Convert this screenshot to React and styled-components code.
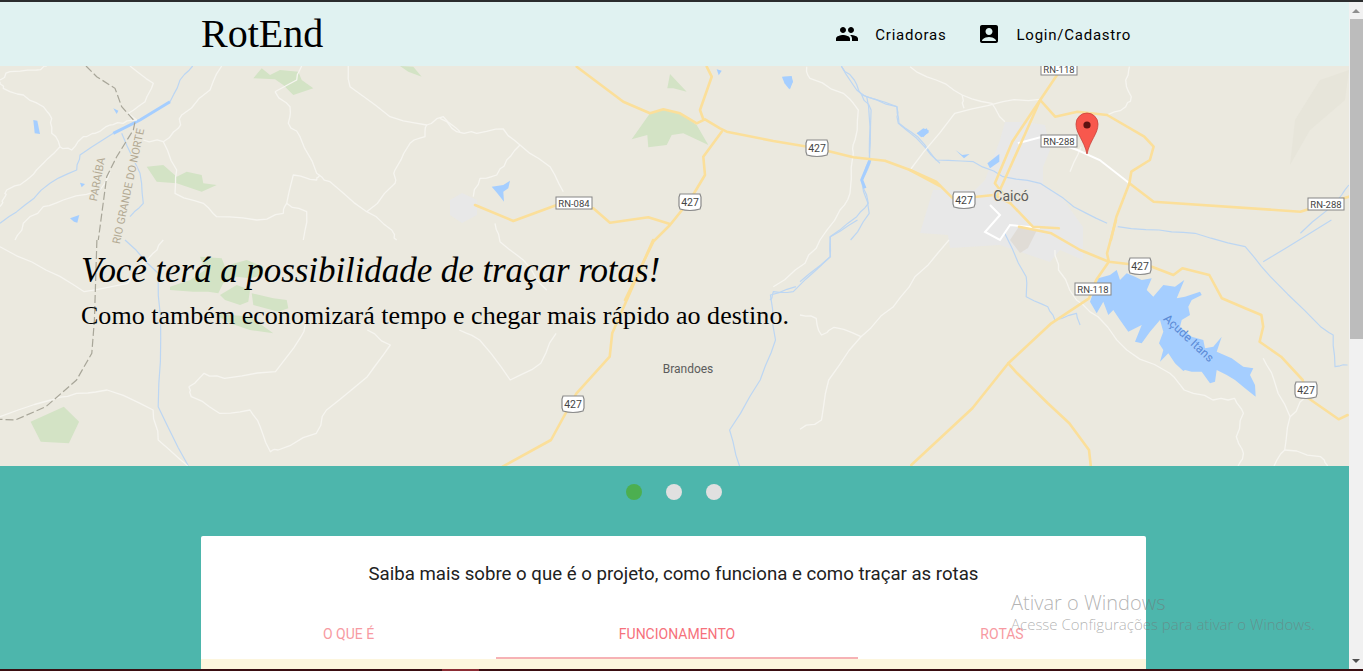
import styled, { createGlobalStyle } from 'styled-components';
import { MdPeople, MdAccountBox } from 'react-icons/md';

const GlobalStyle = createGlobalStyle`
    html, body {
        margin: 0;
        height: 100%;
        overflow: hidden;
    }
    * { box-sizing: border-box; }
`

const Screen = styled.div`
    position: relative;
    display: flex;
    flex-direction: column;
    height: 100vh;
    font-family: Roboto, "Liberation Sans", sans-serif;
`

const TopEdge = styled.div`
    height: 2px;
    background: #2b2d2e;
`

const BottomEdge = styled.div`
    display: flex;
    height: 2px;
    padding-left: 442px;
    background: #3a0e12;
    &::before {
        content: "";
        width: 37px;
        background: #8b2c34;
    }
`

const Viewport = styled.div`
    display: flex;
    flex: 1;
    min-height: 0;
`

const Page = styled.main`
    display: flex;
    flex-direction: column;
    flex: 1;
    min-width: 0;
    overflow: hidden;
`

const Scrollbar = styled.div`
    display: flex;
    flex-direction: column;
    width: 14px;
    background: #f1f1f1;
`

const ScrollArrow = styled.div`
    display: flex;
    align-items: center;
    justify-content: center;
    height: 17px;
    &::before {
        content: "";
        border-left: 4px solid transparent;
        border-right: 4px solid transparent;
        border-bottom: ${p => (p.$down ? 'none' : '4px solid #8e8e8e')};
        border-top: ${p => (p.$down ? '4px solid #505050' : 'none')};
    }
`

const ScrollTrack = styled.div`
    flex: 1;
`

const ScrollThumb = styled.div`
    height: 320px;
    margin-left: 1px;
    background: #bcbcbc;
`

const Nav = styled.nav`
    flex: none;
    height: 64px;
    background: #e0f2f1;
`

const NavInner = styled.div`
    display: flex;
    align-items: center;
    justify-content: space-between;
    width: 945px;
    height: 100%;
    margin-left: 201px;
`

const Brand = styled.a`
    font-family: "Liberation Serif", "Times New Roman", serif;
    font-size: 40px;
    line-height: 64px;
    color: #000;
`

const NavLinks = styled.ul`
    display: flex;
    margin: 0;
    padding: 0;
    list-style: none;
`

const NavLink = styled.li`
    display: flex;
    align-items: center;
    gap: 16px;
    padding: 0 15px;
    font-size: 15px;
    letter-spacing: 0.76px;
    color: #000;
    svg { display: block; }
`

const NavLabel = styled.span`
    padding-top: 2px;
`

const Hero = styled.section`
    position: relative;
    flex: none;
    height: 400px;
    background: #ebe9df;
    overflow: hidden;
`

const MapDrawing = styled.svg`
    display: block;
    width: 1349px;
    height: 400px;
`

const Caption = styled.div`
    position: absolute;
    top: 182px;
    left: 81px;
    color: #000;
    font-family: "Liberation Serif", "Times New Roman", serif;
`

const CaptionTitle = styled.h3`
    margin: 0 0 6px;
    font-size: 35px;
    font-weight: 400;
    font-style: italic;
    line-height: 46px;
    letter-spacing: -0.07px;
`

const CaptionText = styled.h5`
    margin: 0;
    font-size: 26px;
    font-weight: 400;
    line-height: 32px;
    letter-spacing: 0.03px;
`

const Band = styled.section`
    flex: 1;
    min-height: 0;
    padding-top: 18px;
    background: #4db6ac;
`

const Dots = styled.ul`
    display: flex;
    justify-content: center;
    gap: 24px;
    margin: 0 0 36px;
    padding: 0 2px 0 0;
    list-style: none;
`

const Dot = styled.li`
    width: 16px;
    height: 16px;
    border-radius: 50%;
    background: ${p => (p.$active ? '#4caf50' : '#e0e0e0')};
`

const Card = styled.article`
    width: 945px;
    margin-left: 201px;
    border-radius: 2px 2px 0 0;
    background: #fff;
`

const CardTitle = styled.h4`
    margin: 0;
    height: 74px;
    padding-top: 26px;
    font-size: 18.65px;
    font-weight: 400;
    line-height: 24px;
    text-align: center;
    color: #212121;
`

const Tabs = styled.div`
    display: grid;
    grid-template-columns: 295px 362px 288px;
    height: 49px;
`

const Tab = styled.a`
    display: flex;
    align-items: center;
    justify-content: center;
    padding-top: 1px;
    font-size: 14px;
    text-transform: uppercase;
    color: ${p => (p.$active ? '#f6717c' : '#f79aa2')};
    border-bottom: 2px solid ${p => (p.$active ? '#f6b2b5' : 'transparent')};
`

const TabBody = styled.div`
    height: 10px;
    background: #fdf6de;
`

const Watermark = styled.div`
    position: absolute;
    top: 590px;
    left: 1011px;
    font-family: "Open Sans", "Noto Sans", sans-serif;
    color: rgba(115, 115, 115, 0.55);
    pointer-events: none;
`

const WatermarkTitle = styled.div`
    font-size: 20px;
    font-weight: 300;
    line-height: 26px;
`

const WatermarkText = styled.div`
    margin-top: -2px;
    font-size: 15px;
    font-weight: 300;
    line-height: 20px;
`

// the crops of the map were read at different scales, so points stay in crop units
const crop = (ox, oy, sx, sy) => pts => {
    let out = [];
    for (let i = 0; i < pts.length; i += 2) {
        out.push(`${(ox + pts[i] / sx).toFixed(1)},${(oy + pts[i + 1] / sy).toFixed(1)}`);
    }
    return out.join(' ');
};

const west = crop(0, 0, 3, 3);
const mid = crop(440, 60, 3, 3);
const south = crop(0, 240, 1.96, 3);
const east = crop(780, 0, 2.69, 3);
const lake = crop(800, 220, 2.785, 3);
const itans = crop(1085, 265, 3, 3);
const forest = crop(150, 250, 3, 3);

// small country roads and streams wander, so split each segment and push it off line
const wobble = (line, amp) => {
    const pts = line.split(' ').map(s => s.split(',').map(Number));
    let out = [];
    pts.forEach((p, i) => {
        if (i === 0) { out.push(p.join(',')); return; }
        const q = pts[i - 1];
        for (let k = 1; k <= 3; k++) {
            const x = q[0] + ((p[0] - q[0]) * k) / 3;
            const y = q[1] + ((p[1] - q[1]) * k) / 3;
            const off = k === 3 ? 0 : amp;
            out.push(`${(x + Math.sin(x * 7.3 + y) * off).toFixed(1)},${(y + Math.cos(y * 5.1 + x) * off).toFixed(1)}`);
        }
    });
    return out.join(' ');
};

const yellowRoads = [
    mid([410, 20, 550, 125, 630, 160, 670, 148, 720, 160, 770, 190, 795, 178, 840, 205, 860, 215, 1000, 243, 1130, 265, 1240, 292, 1335, 302, 1410, 330, 1500, 378]),
    east([350, 510, 420, 545, 465, 595, 530, 590, 575, 585, 620, 610, 680, 680, 750, 685]),
    lake([610, 20, 700, 40, 780, 90, 860, 125, 980, 140, 1040, 165, 1065, 145, 1140, 165, 1175, 235, 1240, 265, 1285, 285, 1290, 320, 1280, 365, 1340, 410, 1400, 480, 1410, 530, 1500, 598, 1525, 585]),
    east([745, 225, 700, 300, 625, 425, 578, 550, 620, 610]),
    east([700, 300, 650, 425, 600, 550, 585, 585]),
    east([700, 300, 740, 350, 800, 335, 880, 345, 980, 410, 1005, 440, 995, 480, 945, 515, 940, 550, 905, 650, 890, 720]),
    east([940, 550, 1005, 605, 1400, 635, 1430, 625, 1530, 590]),
    lake([880, 0, 855, 100, 860, 125, 825, 180, 805, 235, 700, 310, 580, 430, 480, 565, 310, 735]),
    lake([580, 430, 605, 460, 690, 550, 750, 610, 805, 690, 810, 738]),
    mid([800, 20, 815, 50, 780, 150, 790, 178]),
    mid([845, 215, 790, 290, 795, 345, 750, 420, 690, 495, 640, 545, 555, 720]),
    south([1280, 0, 1200, 280, 1195, 350, 1130, 460, 1080, 600, 985, 680]),
    mid([105, 435, 220, 483, 350, 435, 460, 445, 510, 488, 625, 472, 690, 492]),
];

const whiteRoads = [
    west([0, 245, 10, 265, 70, 285, 130, 320, 155, 355, 155, 400, 180, 440, 215, 450, 250, 410, 285, 400, 330, 375, 370, 370, 410, 360]),
    west([180, 440, 130, 490, 80, 540, 20, 570, 15, 590, 0, 620]),
    west([0, 240, 30, 215, 110, 210, 140, 198]),
    west([390, 198, 460, 250, 435, 305, 385, 340, 410, 360]),
    west([665, 198, 630, 270, 545, 345, 535, 385, 490, 425, 430, 420]),
    west([490, 425, 530, 510, 525, 580, 610, 610, 650, 650, 770, 660, 850, 640, 860, 610, 880, 525, 950, 540, 960, 525]),
    west([860, 610, 920, 635, 910, 720]),
    west([825, 275, 870, 320, 865, 370, 900, 410, 950, 520, 990, 545, 1100, 635, 1175, 690, 1190, 720]),
    west([905, 198, 890, 240, 825, 275]),
    west([1045, 198, 1050, 260, 1170, 350, 1280, 375, 1330, 350, 1380, 395]),
    west([1280, 375, 1275, 410, 1230, 430, 1185, 510, 1185, 550, 1100, 635]),
    west([330, 515, 300, 570, 190, 600, 130, 620, 70, 670, 45, 720]),
    south([0, 20, 90, 90, 165, 155, 250, 130, 300, 40, 320, 0]),
    south([370, 440, 400, 400, 440, 415, 540, 395, 590, 290, 600, 230]),
    south([370, 440, 375, 470, 430, 520, 490, 510, 510, 560, 530, 635, 545, 630, 620, 580, 640, 510, 720, 410, 765, 315, 720, 270]),
    south([0, 530, 100, 480, 150, 460, 210, 450, 300, 510, 310, 600, 370, 680]),
    south([900, 270, 940, 300, 1000, 420, 1060, 370, 1090, 280]),
    mid([0, 175, 50, 215, 110, 220, 190, 207, 240, 255, 330, 320, 370, 395]),
    mid([240, 255, 200, 300, 170, 345, 120, 355, 100, 410]),
    mid([165, 490, 180, 545, 250, 600, 320, 690]),
    mid([1100, 20, 1110, 55, 1210, 100, 1255, 150, 1245, 240, 1240, 280, 1230, 400, 1200, 450, 1140, 540, 1095, 610, 1000, 680]),
    east([350, 510, 470, 340, 600, 305, 700, 298]),
    east([350, 200, 420, 240, 490, 285, 570, 310, 605, 365]),
    east([490, 285, 495, 325]),
    east([940, 200, 930, 240, 945, 290, 930, 320, 880, 345]),
    east([780, 515, 810, 440]),
    lake([710, 90, 720, 150, 770, 240, 830, 290, 910, 390, 1030, 460, 1070, 510, 1150, 540, 1210, 535, 1235, 580, 1215, 650, 1235, 700, 1220, 738]),
    lake([415, 60, 320, 170, 260, 260, 170, 350, 80, 480, 60, 600, 0, 628]),
    lake([0, 285, 45, 295, 60, 345, 95, 322, 170, 350]),
    lake([1290, 415, 1320, 480, 1365, 590, 1350, 690, 1320, 738]),
    lake([1365, 590, 1410, 530]),
    lake([1350, 690, 1450, 710, 1470, 738]),
];

const rivers = [
    west([365, 400, 420, 520, 430, 610, 390, 650]),
    south([245, 0, 310, 100, 315, 300, 310, 500, 370, 680]),
    west([0, 670, 75, 615, 150, 550, 230, 510, 240, 465, 340, 400]),
    west([510, 305, 540, 240, 578, 198]),
    mid([1205, 20, 1250, 90, 1280, 110, 1290, 200, 1290, 310, 1265, 360, 1285, 430, 1250, 470, 1170, 530, 1170, 590, 1060, 695, 1000, 695, 990, 720]),
    mid([1280, 110, 1370, 140, 1375, 190, 1430, 235, 1500, 310]),
    south([1560, 140, 1510, 165, 1520, 300, 1490, 420, 1430, 570, 1450, 680]),
    east([165, 198, 200, 240, 220, 285, 315, 320, 320, 370, 370, 410, 420, 480, 520, 485, 600, 530, 700, 550, 790, 620, 880, 670]),
    east([220, 285, 245, 330, 240, 480, 220, 545, 240, 640, 190, 720]),
    lake([885, 20, 1000, 30, 1100, 40, 1240, 80, 1310, 170, 1450, 320, 1485, 345, 1490, 440, 1525, 435]),
    lake([1290, 125, 1480, 0]),
    lake([570, 40, 630, 170, 630, 230, 690, 260, 710, 300, 770, 280, 780, 315]),
    lake([0, 185, 85, 110, 85, 50, 160, 0]),
    east([1530, 555, 1500, 600, 1400, 700]),
];

const lakes = [
    west([100, 360, 112, 362, 120, 402, 104, 400]),
    west([210, 655, 238, 645, 232, 668, 222, 665]),
    west([240, 548, 255, 552, 245, 562]),
    west([340, 325, 355, 332, 350, 342]),
    mid([155, 380, 190, 375, 210, 362, 205, 385, 190, 395, 192, 425, 172, 400]),
    mid([1030, 50, 1055, 48, 1058, 65, 1050, 88, 1035, 70]),
    mid([1430, 220, 1450, 205, 1468, 212, 1450, 232]),
    mid([830, 28, 845, 32, 836, 46]),
    east([5, 230, 30, 230, 35, 245, 25, 268, 12, 250]),
    east([368, 400, 395, 385, 400, 398, 380, 412]),
    east([558, 490, 590, 462, 590, 485, 565, 505]),
    east([472, 450, 490, 465, 510, 462, 495, 475]),
    itans([15, 110, 40, 40, 75, 30, 95, 15, 105, 45, 125, 25, 150, 35, 170, 45, 200, 40, 185, 75, 205, 95, 235, 60, 270, 65, 298, 45, 275, 100, 300, 95, 345, 80, 350, 90, 320, 105, 310, 125, 315, 150, 290, 165, 285, 185, 320, 215, 355, 225, 360, 250, 385, 245, 410, 215, 395, 260, 440, 280, 475, 305, 505, 310, 495, 330, 510, 360, 512, 395, 480, 370, 450, 345, 425, 330, 395, 315, 390, 350, 375, 355, 350, 320, 320, 320, 300, 315, 295, 318, 270, 295, 250, 265, 225, 290, 235, 255, 222, 235, 235, 200, 225, 165, 195, 200, 170, 235, 150, 230, 170, 180, 130, 200, 105, 165, 85, 135, 70, 150, 55, 110, 35, 145]),
];

const woods = [
    west([760, 235, 785, 205, 810, 225, 840, 210, 895, 215, 905, 240, 940, 265, 880, 285, 850, 255, 825, 238]),
    west([440, 500, 490, 495, 530, 530, 560, 515, 605, 525, 610, 550, 650, 555, 605, 575, 530, 550, 470, 545]),
    west([1200, 198, 1240, 200, 1265, 230, 1225, 215]),
    forest([150, 20, 215, 25, 225, 50, 255, 40, 290, 30, 340, 50, 340, 75, 300, 85, 260, 80, 220, 100, 205, 130, 175, 125, 130, 125, 60, 120, 60, 110, 120, 90, 165, 60]),
    forest([210, 135, 260, 105, 300, 120, 295, 155, 270, 165, 225, 150]),
    forest([305, 130, 370, 145, 410, 150, 415, 175, 385, 185, 310, 165]),
    forest([190, 190, 300, 200, 370, 250, 300, 240, 240, 220]),
    south([60, 545, 125, 500, 155, 545, 135, 610, 80, 605]),
    mid([575, 238, 630, 160, 670, 150, 720, 160, 770, 195, 805, 255, 730, 220, 695, 225, 680, 255, 625, 262, 622, 225]),
    mid([682, 85, 690, 42, 740, 95, 700, 85]),
];

const cityAreas = [
    '920,233 933,190 975,190 985,180 1000,140 1005,122 1025,122 1045,125 1050,150 1043,167 1043,185 1060,195 1083,227 1083,260 1060,250 1050,262 1000,245 950,248 948,235',
    '450,200 462,193 477,200 477,215 462,223 450,215',
    '1290,165 1310,130 1345,100 1349,70 1320,80 1295,120',
];

const shields = [[817, 148], [690, 202], [964, 200], [1140, 266], [1306, 390], [573, 404]];

const plates = [
    ['RN-118', 1059, 69],
    ['RN-288', 1059, 141],
    ['RN-084', 574, 203],
    ['RN-288', 1326, 204],
    ['RN-118', 1093, 289],
];

const MapLabel = styled.text`
    font-family: Roboto, "Liberation Sans", sans-serif;
    font-size: ${p => p.$size || 11}px;
    fill: ${p => p.$color || '#5c5c5c'};
    text-anchor: middle;
`

const HaloLabel = styled(MapLabel)`
    paint-order: stroke;
    stroke: #ebe9df;
    stroke-width: 2px;
`

const MapArt = () => (
    <MapDrawing viewBox="0 66 1349 400" aria-label="Mapa de Caicó">
        <defs>
            <filter id="soft"><feGaussianBlur stdDeviation="0.4" /></filter>
        </defs>
        <g filter="url(#soft)">
            <rect x="0" y="66" width="1349" height="400" fill="#ebe9df" />
            {woods.map((p, i) => <polygon key={i} points={p} fill="#d3e3c5" />)}
            {cityAreas.map((p, i) => (
                <polygon key={i} points={p} fill={i === 2 ? '#e7e5da' : '#e8e8e8'} />
            ))}
            <polygon points="1010,240 1020,225 1038,228 1028,248 1020,253" fill="#e0dcd6" />
            {rivers.map((p, i) => (
                <polyline key={i} points={wobble(p, 0.8)} fill="none" stroke="#bcd6f3" strokeWidth="1.2" strokeLinejoin="round" />
            ))}
            <polyline points={west([340, 400, 420, 360, 510, 305])} fill="none" stroke="#a5ceff" strokeWidth="3" />
            <polyline points={mid([1290, 300, 1265, 360, 1275, 385])} fill="none" stroke="#a5ceff" strokeWidth="3" />
            {lakes.map((p, i) => <polygon key={i} points={p} fill="#a5ceff" />)}
            {whiteRoads.map((p, i) => (
                <polyline key={i} points={wobble(p, 1.3)} fill="none" stroke="#f6f5f0" strokeWidth="1.3" strokeLinejoin="round" />
            ))}
            <polyline points={east([640, 430, 700, 412, 800, 450, 860, 480, 940, 550])} fill="none" stroke="#fff" strokeWidth="2" />
            <polyline points="990,205 1000,215 985,232 1000,240 1010,225 1040,228" fill="none" stroke="#fff" strokeWidth="2" />
            <polyline points={west([258, 198, 290, 230, 345, 265, 365, 320, 405, 365, 400, 390, 350, 470, 320, 530, 295, 720])} fill="none" stroke="#a8a699" strokeWidth="1.2" strokeDasharray="8 3" />
            <polyline points={south([190, 0, 185, 240, 180, 340, 150, 420, 90, 500, 30, 540, 0, 538])} fill="none" stroke="#a8a699" strokeWidth="1.2" strokeDasharray="8 3" />
            {yellowRoads.map((p, i) => (
                <polyline key={i} points={p} fill="none" stroke="#fbdf9a" strokeWidth="2.6" strokeLinejoin="round" strokeLinecap="round" />
            ))}
        </g>
        <HaloLabel $size={11} $color="#b3aa94" transform="translate(101 180) rotate(-79)">PARAÍBA</HaloLabel>
        <HaloLabel $size={11} $color="#b3aa94" transform="translate(132 187) rotate(-78)">RIO GRANDE DO NORTE</HaloLabel>
        {shields.map(([x, y]) => (
            <g key={`${x}-${y}`}>
                <path d={`M${x - 10} ${y - 8} h20 l1 3 v9 l-1 3 q-10 3 -20 0 l-1 -3 v-9 z`} fill="#fff" stroke="#8a8a8a" strokeWidth="1.2" />
                <MapLabel $size={10.5} $color="#444" x={x} y={y + 4}>427</MapLabel>
            </g>
        ))}
        {plates.map(([t, x, y]) => (
            <g key={`${x}-${y}`}>
                <rect x={x - 18} y={y - 6} width="36" height="12" fill="#fff" stroke="#858585" strokeWidth="1" />
                <MapLabel $size={9.5} $color="#444" x={x} y={y + 3.5}>{t}</MapLabel>
            </g>
        ))}
        <HaloLabel $size={14} $color="#5c5c5c" x="1011" y="201">Caicó</HaloLabel>
        <HaloLabel $size={12} x="688" y="373">Brandoes</HaloLabel>
        <MapLabel $size={12} $color="#5a8ad6" transform="translate(1186 341) rotate(43)">Açude Itans</MapLabel>
        <path d="M1087 154 C1084 140 1076 134 1076 124 A11 11 0 1 1 1098 124 C1098 134 1090 140 1087 154 Z" fill="#f8584d" stroke="#c8413a" strokeWidth="0.8" />
        <circle cx="1087" cy="125" r="3.6" fill="#5e1210" />
    </MapDrawing>
);

const tabs = ['O que é', 'Funcionamento', 'Rotas'];

const App = () => {
    return (
        <>
            <GlobalStyle />
            <Screen>
                <TopEdge />
                <Viewport>
                    <Page>
                        <Nav>
                            <NavInner>
                                <Brand>RotEnd</Brand>
                                <NavLinks>
                                    <NavLink><MdPeople size={24} /><NavLabel>Criadoras</NavLabel></NavLink>
                                    <NavLink><MdAccountBox size={24} /><NavLabel>Login/Cadastro</NavLabel></NavLink>
                                </NavLinks>
                            </NavInner>
                        </Nav>
                        <Hero>
                            <MapArt />
                            <Caption>
                                <CaptionTitle>Você terá a possibilidade de traçar rotas!</CaptionTitle>
                                <CaptionText>Como também economizará tempo e chegar mais rápido ao destino.</CaptionText>
                            </Caption>
                        </Hero>
                        <Band>
                            <Dots>
                                <Dot $active />
                                <Dot />
                                <Dot />
                            </Dots>
                            <Card>
                                <CardTitle>Saiba mais sobre o que é o projeto, como funciona e como traçar as rotas</CardTitle>
                                <Tabs>
                                    {tabs.map((t, i) => <Tab key={t} $active={i === 1}>{t}</Tab>)}
                                </Tabs>
                                <TabBody />
                            </Card>
                        </Band>
                    </Page>
                    <Scrollbar>
                        <ScrollArrow />
                        <ScrollThumb />
                        <ScrollTrack />
                        <ScrollArrow $down />
                    </Scrollbar>
                </Viewport>
                <BottomEdge />
                <Watermark>
                    <WatermarkTitle>Ativar o Windows</WatermarkTitle>
                    <WatermarkText>Acesse Configurações para ativar o Windows.</WatermarkText>
                </Watermark>
            </Screen>
        </>
    );
};

export default App;
